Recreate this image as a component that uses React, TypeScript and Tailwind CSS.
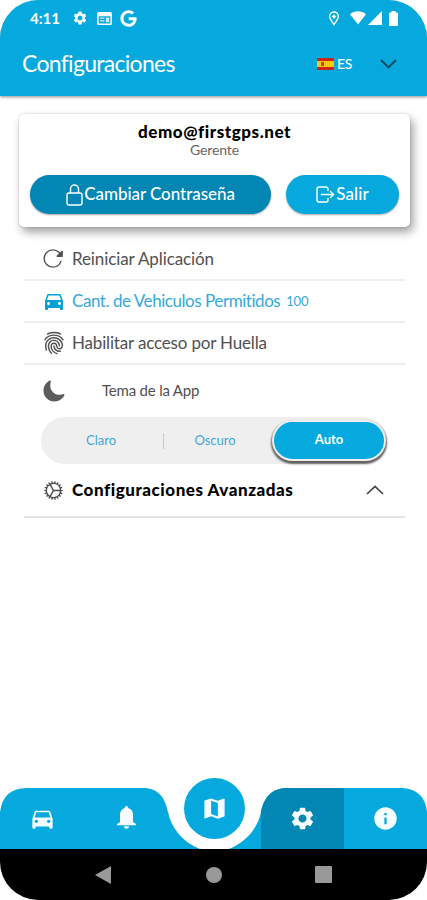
import React from "react";
import {
  MdDirectionsCar,
  MdMap,
  MdSettings,
  MdInfo,
} from "react-icons/md";
import {
  IoReload,
  IoFingerPrint,
  IoMoon,
  IoCogOutline,
} from "react-icons/io5";
import { FaGoogle } from "react-icons/fa";

function StatusBar() {
  return (
    <div className="flex h-9 items-center pl-[30px] pr-[29px] text-white">
      <span className="w-[42px] whitespace-nowrap text-[15px] font-bold leading-none">4:11</span>
      <MdSettings className="size-4" />
      <svg viewBox="0 0 16 14" className="ml-[9px] h-[13px] w-[15px]">
        <path fillRule="evenodd" fill="currentColor" d="M2 0h12a2 2 0 0 1 2 2v10a2 2 0 0 1-2 2H2a2 2 0 0 1-2-2V2a2 2 0 0 1 2-2zM1.7 4.500v7.800h12.600V4.500z" />
        <path fill="currentColor" d="M3 6h5v1.300H3zM3 9h5v1.300H3zM9.500 6H13v5H9.500z" opacity=".8" />
      </svg>
      <FaGoogle className="ml-[8px] size-[17px]" />
      <svg viewBox="0 0 12 16" className="ml-auto h-[15px] w-[12px]" fill="none" stroke="currentColor" strokeWidth="1.5">
        <path d="M6 14.500C3.500 11 1.300 8.500 1.300 5.700a4.700 4.700 0 0 1 9.400 0C10.700 8.500 8.500 11 6 14.500z" />
        <path d="M6 3.600v4.600M3.700 5.900h4.600" />
      </svg>
      <svg viewBox="0 0 16 14" className="ml-[10px] h-[14px] w-4">
        <path fill="currentColor" d="M0 3.200C5-.6 11-.6 16 3.200L8 13.600z" />
      </svg>
      <svg viewBox="0 0 14 14" className="ml-[2px] h-[14px] w-[14px]">
        <path fill="currentColor" d="M14 0v14H0z" />
      </svg>
      <svg viewBox="0 0 9 15" className="ml-[7px] h-[15px] w-[9px]">
        <path fill="currentColor" d="M2.500 0h4v1.500H8a1 1 0 0 1 1 1V14a1 1 0 0 1-1 1H1a1 1 0 0 1-1-1V2.500a1 1 0 0 1 1-1h1.500z" />
      </svg>
    </div>
  );
}

function Header() {
  return (
    <header className="h-24 shrink-0 bg-[#05a9dd] shadow-[0_1px_3px_rgba(0,0,0,0.45)]">
      <StatusBar />
      <div className="flex h-14 items-center pl-[22px] pr-[30px] text-white">
        <h1 className="-mt-[2px] whitespace-nowrap text-[23px] leading-none tracking-[-0.7px]">Configuraciones</h1>
        <svg viewBox="0 0 17 12" className="ml-auto h-3 w-[17px]">
          <rect width="17" height="12" rx="1" fill="#c8251b" />
          <rect y="3" width="17" height="6" fill="#fdc70f" />
          <path d="M4 4h3v4H4z" fill="#a8560c" />
        </svg>
        <span className="ml-[3px] w-[16px] text-[14px] font-medium leading-none tracking-[-0.3px]">ES</span>
        <svg viewBox="0 0 17 10" className="ml-[27px] h-[10px] w-[17px]" fill="none" stroke="#17475c" strokeWidth="1.8">
          <path d="M1 1l7.500 7.500L16 1" />
        </svg>
      </div>
    </header>
  );
}

function AccountCard() {
  return (
    <section className="ml-[19px] mt-[18px] flex h-[113px] w-[391px] shrink-0 flex-col items-center rounded-[5px] bg-white shadow-[3px_5px_10px_rgba(0,0,0,0.38),0_0_2px_rgba(0,0,0,0.2)]">
      <p className="mt-[8px] whitespace-nowrap text-[17px] font-black leading-5 tracking-[0.55px] text-black">demo@firstgps.net</p>
      <p className="text-[14px] leading-4 tracking-[-0.1px] text-[#666]">Gerente</p>
      <div className="mt-[17px] flex w-full gap-[15px] pl-[11px] text-[17px] text-white">
        <button className="flex h-[39px] w-[241px] items-center justify-center rounded-full bg-[#0287b4] shadow-[0_1px_2px_rgba(0,0,0,0.35)]">
          <svg viewBox="0 0 17 22" className="mr-px h-[22px] w-[17px]" fill="none" stroke="currentColor" strokeWidth="1.4">
            <rect x="1" y="9" width="15" height="12" rx="2" />
            <path d="M4.500 9V5a4 4 0 0 1 8 0v4" />
          </svg>
          <span className="-mt-[2px] whitespace-nowrap font-medium tracking-[-0.05px]">Cambiar Contraseña</span>
        </button>
        <button className="flex h-[39px] w-[113px] items-center justify-center rounded-full bg-[#05a9dd] shadow-[0_1px_2px_rgba(0,0,0,0.35)]">
          <svg viewBox="0 0 19 17" className="mr-px h-[17px] w-[19px]" fill="none" stroke="currentColor" strokeWidth="1.4">
            <path d="M12 5V3a2 2 0 0 0-2-2H3a2 2 0 0 0-2 2v11a2 2 0 0 0 2 2h7a2 2 0 0 0 2-2v-2M5 8.500h12.500M14 5l3.500 3.500L14 12" />
          </svg>
          <span className="-mt-[2px] font-medium tracking-[0.1px]">Salir</span>
        </button>
      </div>
    </section>
  );
}

function NavBackground() {
  return (
    <svg viewBox="0 0 427 61" className="absolute inset-0 h-[61px] w-[427px]">
      <path fill="#05a9dd" d="M0 61V24Q3 0 27 0H143C158 0 165 9 168 24C171 39 182 54 200 61z" />
      <path fill="#05a9dd" d="M229 61C247 54 258 39 261 24C264 9 272 0 287 0H403Q425 2 427 24V61z" />
      <path fill="#0287b4" d="M261 61V24C264 9 272 0 287 0H344V61z" />
    </svg>
  );
}

export default function App() {
  return (
    <div className="flex h-[900px] w-[427px] flex-col overflow-hidden rounded-[38px] bg-white font-['Lato','Liberation_Sans',sans-serif]">
      <Header />
      <AccountCard />
      <main className="ml-6 mt-[11px] w-[381px] text-[17px] text-[#505050]">
        <div className="flex h-[43px] items-center border-b-2 border-[#efefef] pl-[18px]">
          <IoReload className="mr-[7px] size-[23px]" />
          <span className="whitespace-nowrap tracking-[-0.1px]">Reiniciar Aplicación</span>
        </div>
        <div className="flex h-[42px] items-center border-b-2 border-[#efefef] pl-[18px] text-[#35a9dc]">
          <MdDirectionsCar className="mr-[6px] size-[24px] text-[#05a0d6]" />
          <span className="whitespace-nowrap tracking-[-0.45px]">Cant. de Vehiculos Permitidos</span>
          <span className="ml-[6px] mt-px text-[13px] tracking-[-0.2px]">100</span>
        </div>
        <div className="flex h-[42px] items-center border-b-2 border-[#efefef] pl-[18px]">
          <IoFingerPrint className="mr-[6px] size-6" />
          <span className="whitespace-nowrap tracking-[-0.17px]">Habilitar acceso por Huella</span>
        </div>
        <div className="flex h-[52px] items-center pl-[18px]">
          <IoMoon className="size-[24px] text-[#5c5c5c]" />
          <span className="-mt-[2px] ml-[36px] whitespace-nowrap text-[15px] tracking-[-0.2px]">Tema de la App</span>
        </div>
        <div className="ml-[17px] flex h-[47px] w-[346px] items-center rounded-full bg-[#efefef] text-[13px] text-[#41a8da]">
          <span className="w-[120px] text-center">Claro</span>
          <span className="ml-[2px] h-4 w-px bg-[#c8c8c8]" />
          <span className="w-[102px] text-center">Oscuro</span>
          <span className="-mt-px ml-[6px] flex h-[41px] w-[114px] items-center justify-center rounded-full border-2 border-[#eee] bg-[#05a9dd] font-bold text-white shadow-[0_2px_2px_1px_rgba(0,0,0,0.6)]">Auto</span>
        </div>
        <div className="flex h-[54px] items-center border-b-2 border-[#e4e4e4] pl-[18px]">
          <IoCogOutline className="mr-[7px] size-[23px]" />
          <span className="-mt-px whitespace-nowrap font-black tracking-[0.55px] text-black">Configuraciones Avanzadas</span>
          <svg viewBox="0 0 18 10" className="ml-auto mr-[21px] h-[10px] w-[18px]" fill="none" stroke="#444" strokeWidth="1.7">
            <path d="M1 9l8-7.500L17 9" />
          </svg>
        </div>
      </main>
      <nav className="relative mt-auto h-[61px] shrink-0 text-[#f5fbff]">
        <NavBackground />
        <div className="relative flex h-full items-center">
          <span className="flex w-[84px] justify-center"><MdDirectionsCar className="size-[27px]" /></span>
          <span className="flex w-[84px] justify-center">
            <svg viewBox="0 0 19 23" className="-mt-[2px] h-[23px] w-[19px]" fill="currentColor">
              <path d="M9.500 0a1.700 1.700 0 0 1 1.700 1.900C14.500 2.700 16 5.500 16 8.500V16l3 2v1.200H0V18l3-2V8.500C3 5.500 4.500 2.700 7.800 1.900A1.700 1.700 0 0 1 9.500 0zM7 20.200h5a2.500 2.500 0 0 1-5 0z" />
            </svg>
          </span>
          <span className="mx-[16px] mb-[21px] flex size-[61px] shrink-0 items-center justify-center rounded-full bg-[#05a9dd]"><MdMap className="size-[27px]" /></span>
          <span className="flex w-[82px] justify-center"><MdSettings className="size-[27px]" /></span>
          <span className="flex w-[84px] justify-center pl-px"><MdInfo className="size-[27px]" /></span>
        </div>
      </nav>
      <footer className="flex h-[51px] shrink-0 items-center bg-black text-[#999]">
        <svg viewBox="0 0 16 18" className="ml-[95px] h-[18px] w-4"><path d="M0 9 16 0V18z" fill="currentColor" /></svg>
        <span className="ml-[95px] size-4 rounded-full bg-[#999]" />
        <span className="ml-[93px] size-[17px] rounded-[1px] bg-[#999]" />
      </footer>
    </div>
  );
}
